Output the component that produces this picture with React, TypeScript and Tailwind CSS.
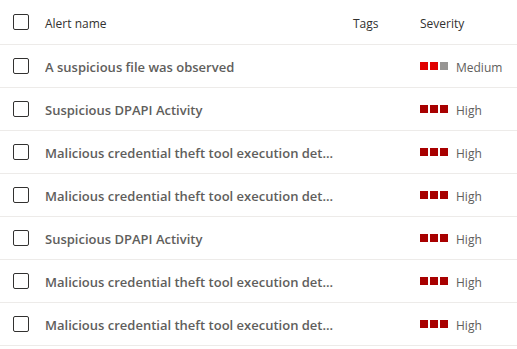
const alerts = [
  { name: 'A suspicious file was observed', severity: 'Medium' },
  { name: 'Suspicious DPAPI Activity', severity: 'High' },
  { name: 'Malicious credential theft tool execution det...', severity: 'High' },
  { name: 'Malicious credential theft tool execution det...', severity: 'High' },
  { name: 'Suspicious DPAPI Activity', severity: 'High' },
  { name: 'Malicious credential theft tool execution det...', severity: 'High' },
  { name: 'Malicious credential theft tool execution det...', severity: 'High' },
]

function Checkbox() {
  return <div className="w-4 h-4 rounded-[2px] border border-[#323130] bg-white shrink-0" />
}

function SeverityBar({ level }: { level: string }) {
  const medium = level === 'Medium'
  return (
    <div className="flex gap-[2px]">
      <span className={`w-2 h-2 ${medium ? 'bg-[#e00000]' : 'bg-[#a80000]'}`} />
      <span className={`w-2 h-2 ${medium ? 'bg-[#e00000]' : 'bg-[#a80000]'}`} />
      <span className={`w-2 h-2 ${medium ? 'bg-[#979593]' : 'bg-[#a80000]'}`} />
    </div>
  )
}

export default function App() {
  return (
    <div
      className="w-[517px] h-[349px] bg-white overflow-hidden"
      style={{ fontFamily: '"Open Sans", "Noto Sans", sans-serif' }}
    >
      {/* Header */}
      <div className="flex items-center h-[45px] border-b border-[#edebe9] text-[12px] text-[#323130]">
        <div className="w-[45px] pl-[13px] flex items-center">
          <Checkbox />
        </div>
        <div className="w-[308px] pt-[3px]">Alert name</div>
        <div className="w-[67px] pt-[3px]">Tags</div>
        <div className="pt-[3px]">Severity</div>
      </div>

      {/* Rows */}
      {alerts.map((a, i) => (
        <div key={i} className="flex items-center h-[43px] border-b border-[#edebe9]">
          <div className="w-[45px] pl-[13px] flex items-center">
            <Checkbox />
          </div>
          <div className="w-[308px] pt-[3px] text-[13px] font-semibold text-[#605e5c] truncate pr-1">{a.name}</div>
          <div className="w-[67px]" />
          <div className="flex items-center gap-2">
            <SeverityBar level={a.severity} />
            <span className="pt-[3px] text-[12px] text-[#605e5c]">{a.severity}</span>
          </div>
        </div>
      ))}
    </div>
  )
}
